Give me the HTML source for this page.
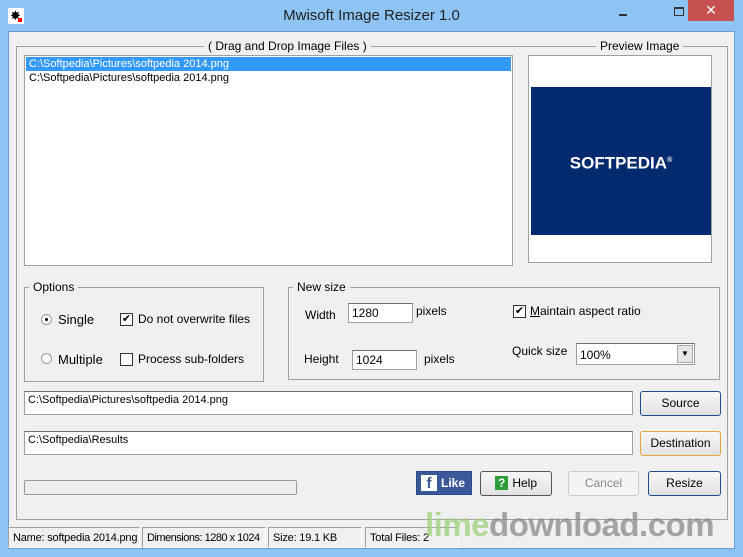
<!DOCTYPE html>
<html><head><style>
*{margin:0;padding:0;box-sizing:border-box}
body{width:743px;height:557px;background:#8ec4f3;font-family:"Liberation Sans",sans-serif;font-size:12px;color:#000;position:relative;overflow:hidden;white-space:nowrap}
.a{position:absolute}
.client{left:8px;top:31px;width:727px;height:518px;background:#f0f0f0;border:1px solid #6a9cd0}
.grp{position:absolute;border:1px solid #a0a0a0;}
.lg{position:absolute;background:#f0f0f0;padding:0 4px;font-size:12px;top:-8px}
.inp{position:absolute;background:#fff;border:1px solid #a0a0a0;border-top-color:#707070;font-size:11px;padding:2px 3px}
.btn{position:absolute;background:linear-gradient(#f6f6f6,#e2e2e2);border:1px solid #1a4e86;border-radius:3px;text-align:center;font-size:12px;line-height:22px}
.cb{position:absolute;width:13px;height:13px;border:1px solid #333;background:#fff;font-size:11px;line-height:11px;text-align:center}
.rb{position:absolute;width:11px;height:11px;border:1px solid #999;border-radius:50%;background:#fff}
.sb{position:absolute;top:527px;height:21px;border:1px solid #a0a0a0;border-right-color:#fff;border-bottom-color:#fff;font-size:11px;line-height:20px;padding-left:4px;overflow:hidden;letter-spacing:-0.2px}
</style></head><body>
<div class="a" style="left:8px;top:8px;width:16px;height:16px;background:#fff"><div class="a" style="left:2px;top:2px;font-size:13px;line-height:12px">✸</div><div class="a" style="left:10px;top:10px;width:4px;height:4px;background:red"></div></div>
<div class="a" style="left:0;top:7px;width:743px;text-align:center;font-size:15px;color:#222">Mwisoft Image Resizer 1.0</div>
<div class="a" style="left:619px;top:14px;width:8px;height:2px;background:#333"></div>
<div class="a" style="left:674px;top:7px;width:10px;height:9px;border:1px solid #333;border-top-width:2px"></div>
<div class="a" style="left:688px;top:0;width:46px;height:21px;background:#c75050;color:#fff;text-align:center;font-size:14px;line-height:21px">✕</div>
<div class="a client"></div>
<div class="grp" style="left:16px;top:46px;width:712px;height:474px"></div>
<div class="a" style="left:204px;top:39px;background:#f0f0f0;padding:0 4px">( Drag and Drop Image Files )</div>
<div class="a" style="left:596px;top:39px;background:#f0f0f0;padding:0 4px">Preview Image</div>
<div class="a" style="left:24px;top:55px;width:489px;height:211px;background:#fff;border:1px solid #a0a0a0;font-size:11px">
<div style="background:#3399ff;color:#fff;height:14px;padding-left:3px;line-height:14px;margin:1px">C:\Softpedia\Pictures\softpedia 2014.png</div>
<div style="padding-left:4px;line-height:13px">C:\Softpedia\Pictures\softpedia 2014.png</div></div>
<div class="a" style="left:528px;top:55px;width:184px;height:208px;background:#fff;border:1px solid #a0a0a0"><div class="a" style="left:2px;top:31px;width:180px;height:148px;background:#032a6e;color:#fff;font-weight:bold;font-size:17px;text-align:center;line-height:148px">SOFTPEDIA<sup style="font-size:7px">®</sup></div></div>
<div class="grp" style="left:24px;top:287px;width:240px;height:95px"><span class="lg" style="left:4px">Options</span></div>
<div class="rb" style="left:41px;top:314px"><div class="a" style="left:3px;top:3px;width:3px;height:3px;background:#000;border-radius:50%"></div></div>
<div class="a" style="left:58px;top:312px;font-size:13px">Single</div>
<div class="rb" style="left:41px;top:353px"></div>
<div class="a" style="left:58px;top:352px;font-size:13px">Multiple</div>
<div class="cb" style="left:120px;top:313px">✔</div>
<div class="a" style="left:138px;top:312px">Do not overwrite files</div>
<div class="cb" style="left:120px;top:353px"></div>
<div class="a" style="left:138px;top:352px">Process sub-folders</div>
<div class="grp" style="left:288px;top:287px;width:432px;height:93px"><span class="lg" style="left:4px">New size</span></div>
<div class="a" style="left:305px;top:308px">Width</div>
<div class="inp" style="left:348px;top:303px;width:65px;height:20px;font-size:12px">1280</div>
<div class="a" style="left:416px;top:304px">pixels</div>
<div class="a" style="left:304px;top:352px">Height</div>
<div class="inp" style="left:352px;top:350px;width:65px;height:20px;font-size:12px">1024</div>
<div class="a" style="left:424px;top:352px">pixels</div>
<div class="cb" style="left:513px;top:305px">✔</div>
<div class="a" style="left:530px;top:304px"><u>M</u>aintain aspect ratio</div>
<div class="a" style="left:512px;top:344px">Quick size</div>
<div class="inp" style="left:576px;top:343px;width:119px;height:22px;font-size:12px;padding-top:4px">100%<div class="a" style="right:1px;top:1px;width:16px;height:18px;background:#e6e6e6;border:1px solid #aaa;font-size:8px;text-align:center;line-height:16px">▼</div></div>
<div class="inp" style="left:24px;top:391px;width:609px;height:24px">C:\Softpedia\Pictures\softpedia 2014.png</div>
<div class="btn" style="left:640px;top:391px;width:81px;height:25px">Source</div>
<div class="inp" style="left:24px;top:431px;width:609px;height:24px">C:\Softpedia\Results</div>
<div class="btn" style="left:640px;top:431px;width:81px;height:25px;border-color:#e1a53a">Destination</div>
<div class="a" style="left:24px;top:480px;width:273px;height:15px;border:1px solid #999;border-radius:2px;background:#eee"></div>
<div class="a" style="left:416px;top:471px;width:56px;height:24px;background:#3b5998;border:1px solid #2d4a88;color:#fff;font-weight:bold;font-size:12px;line-height:22px"><span class="a" style="left:4px;top:3px;width:16px;height:16px;background:#fff;color:#3b5998;font-size:15px;text-align:center;line-height:18px">f</span><span class="a" style="left:24px">Like</span></div>
<div class="btn" style="left:480px;top:471px;width:72px;height:25px;border-color:#555"><span style="background:#2e9e3a;color:#fff;font-weight:bold;padding:0 3px;margin-right:4px">?</span>Help</div>
<div class="btn" style="left:568px;top:471px;width:71px;height:25px;border-color:#ccc;color:#888;background:#f4f4f4">Cancel</div>
<div class="btn" style="left:648px;top:471px;width:73px;height:25px">Resize</div>
<div class="sb" style="left:8px;width:132px">Name: softpedia 2014.png</div>
<div class="sb" style="left:142px;width:124px;letter-spacing:-0.5px">Dimensions: 1280 x 1024</div>
<div class="sb" style="left:268px;width:94px">Size: 19.1 KB</div>
<div class="sb" style="left:365px;width:94px">Total Files: 2</div>
<div class="a" style="left:425px;top:508px;font-size:33px;font-weight:bold;letter-spacing:-0.5px;opacity:.75;line-height:34px"><span style="color:#9bd27a">lime</span><span style="color:#8a8a8a">download.com</span></div>
</body></html>
